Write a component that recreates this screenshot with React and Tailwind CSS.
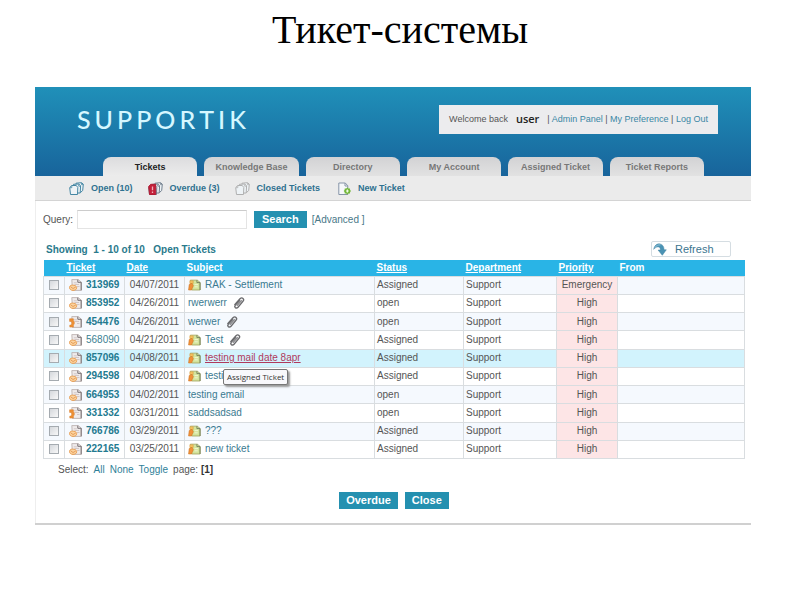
const TABS = ['Tickets', 'Knowledge Base', 'Directory', 'My Account', 'Assigned Ticket', 'Ticket Reports'];

const TICKETS = [
  { id: '313969', date: '04/07/2011', subject: 'RAK - Settlement', assigned: true, priority: 'Emergency' },
  { id: '853952', date: '04/26/2011', subject: 'rwerwerr', attachment: true },
  { id: '454476', date: '04/26/2011', subject: 'werwer', attachment: true, source: 'phone' },
  { id: '568090', date: '04/21/2011', subject: 'Test', assigned: true, attachment: true, read: true },
  { id: '857096', date: '04/08/2011', subject: 'testing mail date 8apr', assigned: true, active: true },
  { id: '294598', date: '04/08/2011', subject: 'testi', assigned: true, tooltip: 'Assigned Ticket' },
  { id: '664953', date: '04/02/2011', subject: 'testing email' },
  { id: '331332', date: '03/31/2011', subject: 'saddsadsad', source: 'phone' },
  { id: '766786', date: '03/29/2011', subject: '???', assigned: true },
  { id: '222165', date: '03/25/2011', subject: 'new ticket', assigned: true },
];

const COLUMNS = [
  { label: 'Ticket', sortable: true },
  { label: 'Date', sortable: true },
  { label: 'Subject' },
  { label: 'Status', sortable: true },
  { label: 'Department', sortable: true },
  { label: 'Priority', sortable: true },
  { label: 'From' },
];

function PagesIcon({ stroke, alert }) {
  return (
    <svg className="h-[14px] w-[15px] shrink-0" viewBox="0 0 15 14" fill="#eef3f6" stroke={stroke} aria-hidden="true">
      <path d="M7 1.2 12.600.7l1.700 1.500-.6 6.300-2.200 2H7z" />
      <path d="M4.500 2.300 9.700 2l1.900 1.700-.4 7.300H5z" />
      <path d="M.7 5.500 2.800 3.500h4.500l1.500 2-.3 7H1.500z" />
      <path d="M2.800 3.700v2H1M9.700 2.200v2h1.800M12.500 1v1.600h1.700" fill="none" strokeWidth=".8" />
      {alert && (
        <>
          <path d="M.7 4.500 2.700 2.300h5V12.500H1.500z" fill="#c3203a" stroke="#b01c35" />
          <path d="M4.500 4.500v3.700M4.500 9.600v1.300" stroke="#f0b0ba" strokeWidth="1.3" />
        </>
      )}
    </svg>
  );
}

function NewTicketIcon() {
  return (
    <svg className="h-[14px] w-[13px] shrink-0" viewBox="0 0 13 14" fill="none" aria-hidden="true">
      <path d="M.8 1h6.500l2.500 2.800V12.500H.8z" fill="#f6f8fa" stroke="#8795a8" />
      <path d="M7 1v3h2.800" stroke="#8795a8" />
      <path d="m9.300 5.200 1 1.400 1.700-.1.100 1.600 1 .9-1 .9-.1 1.600-1.700-.1-1 1.400-1-1.400-1.600.1-.1-1.600-.9-.9.9-.9.100-1.600 1.600.1z" fill="#73b73a" />
      <path d="M9.400 7.600v2.800M8 9h2.800" stroke="#f1fbe6" strokeWidth="1.200" />
    </svg>
  );
}

function TicketIcon({ source }) {
  return (
    <svg className="h-[12px] w-[13px] shrink-0" viewBox="0 0 13 12" fill="none" aria-hidden="true">
      <path d="M2.800.6h6.400L12.200 3v8.400H3.500z" fill="#efebeb" stroke="#b5a9a8" strokeWidth=".8" />
      <path d="M8.800.7v2.600h3.400v8" stroke="#777073" />
      <path d="M4.800 3.800h3M5.500 5.500h4.500M8 7.500h2.500" stroke="#c9bcbc" strokeWidth=".8" />
      {source === 'phone' ? (
        <path d="M.6 2.800h3.800v1.900c1.300 1.500 1.300 3 0 4.400v2H.8V9h1.500c.6-1.300.6-2.400 0-3.600H.6z" fill="#ee9136" stroke="#d97822" strokeWidth=".5" />
      ) : (
        <>
          <path d="M.5 8.500c0-1.500 1-2.400 3-2.400s4.200.7 4.200 2.600-1.700 2.700-3.700 2.700S.5 10.400.5 8.500z" fill="#fbd3a0" stroke="#e89b4c" strokeWidth=".9" />
          <path d="m1.500 7.700 2.500 1.800L6.800 8" stroke="#e08f45" strokeWidth=".8" />
        </>
      )}
    </svg>
  );
}

function AssignedIcon() {
  return (
    <svg className="h-[12px] w-[13px] shrink-0" viewBox="0 0 14 12" fill="none" aria-hidden="true">
      <path d="M2.500.8h7.500l3 2.400v8.200H4z" fill="#d3e49c" stroke="#a3a55f" strokeWidth=".9" />
      <path d="M9.600.8v2.600h3.400v8" stroke="#737f5d" />
      <path d="M2 1.500h3.600v2.800H2z" fill="#f6c765" stroke="#d99a3a" strokeWidth=".6" />
      <path d="M.6 11.400 1.300 5.500l3-1.300 1.500 2.500-2 4.700z" fill="#f0903a" stroke="#cf7622" strokeWidth=".6" />
      <path d="M7 5.600h3.800M7 8h3.500" stroke="#f3f9d9" />
    </svg>
  );
}

function ClipIcon() {
  return (
    <svg className="h-[12px] w-[12px] shrink-0" viewBox="0 0 12 12" fill="none" stroke="#6b6b6e" aria-hidden="true">
      <path d="M1.500 8 7 1.800c1-1 2.100-1.200 3-.4.9.9.8 2-.1 3L5 10.200c-.8.9-1.800 1-2.600.4-.8-.7-.7-1.700 0-2.500L7 3.200" strokeWidth="1.400" />
      <path d="m3.800 8.800 5-5.600" strokeWidth="1.500" stroke="#8b8b8e" />
    </svg>
  );
}

function RefreshIcon() {
  return (
    <svg className="h-[13px] w-[14px] shrink-0" viewBox="0 0 14 13" aria-hidden="true">
      <path d="M.7 6.300C1.500 2.400 4 .6 6.800.9c2.900.4 4.300 2.700 4.200 5.900h2.300l-4 5.500-4.200-5.200h2.300c.1-1.900-.5-3-1.900-3.200C3.800 3.700 2.300 4.500.7 6.300z" fill="#4a93b4" stroke="#3a7f9f" strokeWidth=".5" />
      <path d="M2 4.500C3.500 2.200 5.600 1.600 7.300 2" fill="none" stroke="#93c6dc" />
    </svg>
  );
}

function Header() {
  return (
    <header className="bg-linear-to-b from-[#2090b9] to-[#18649b]">
      <div className="flex h-[70px] items-start justify-between pt-[18px] pr-[33px] pl-[42px]">
        <h2 className="flex gap-[4px] font-['Lato'] text-[25px] leading-[28px] font-medium text-[#d5f7ff]" aria-label="SUPPORTIK">
          {[...'SUPPORTIK'].map((letter, i) => (
            <span key={i}>{letter}</span>
          ))}
        </h2>
        <div className="flex h-[29px] items-center bg-[#ececee] px-[10px] text-[9px] whitespace-nowrap text-[#555]">
          <span>Welcome back</span>
          <strong className="mx-2 font-['Open_Sans'] text-[11px] font-semibold text-[#222]">user</strong>
          <span>
            | <a href="#admin" className="text-[#3a87a5]">Admin Panel</a> |{' '}
            <a href="#preference" className="text-[#3a87a5]">My Preference</a> |{' '}
            <a href="#logout" className="text-[#3a87a5]">Log Out</a>
          </span>
        </div>
      </div>
      <nav className="flex gap-[7px] pr-[47px] pl-[68px]">
        {TABS.map((tab, i) => (
          <a
            key={tab}
            href="#tab"
            className={
              i === 0
                ? 'flex h-[19px] flex-1 items-center justify-center rounded-t-lg bg-linear-to-b from-[#dcdcde] to-[#ececec] pt-[3px] text-[9px] font-bold whitespace-nowrap text-[#222]'
                : 'flex h-[19px] flex-1 items-center justify-center rounded-t-lg bg-linear-to-b from-[#d2d2d4] to-[#e2e2e2] pt-[3px] text-[9px] font-bold whitespace-nowrap text-[#777]'
            }
          >
            {tab}
          </a>
        ))}
      </nav>
    </header>
  );
}

function SubNav() {
  return (
    <nav className="flex h-[25px] items-center gap-[15px] border-b border-[#d4d4d4] bg-[#ebebeb] pt-px pl-[34px] text-[9px] font-bold text-[#2f7190]">
      <a href="#open" className="flex items-center gap-[7px]">
        <PagesIcon stroke="#4486a3" />
        Open (10)
      </a>
      <a href="#overdue" className="flex items-center gap-[7px]">
        <PagesIcon stroke="#72808f" alert />
        Overdue (3)
      </a>
      <a href="#closed" className="flex items-center gap-[7px]">
        <PagesIcon stroke="#b0b0b0" />
        Closed Tickets
      </a>
      <a href="#new" className="flex items-center gap-[7px] pl-[3px]">
        <NewTicketIcon />
        New Ticket
      </a>
    </nav>
  );
}

function TicketRow({ ticket, striped }) {
  const cell = 'border border-[#d9dde0]';
  return (
    <tr className={ticket.active ? 'bg-[#d2f3fd]' : striped ? 'bg-[#f5f9fe]' : 'bg-white'}>
      <td className={cell}>
        <input
          type="checkbox"
          aria-label={`Select ticket ${ticket.id}`}
          className="mx-auto block size-[10px] appearance-none border border-[#a5abb0] bg-linear-to-br from-[#d5d8dc] to-[#f8f8f8]"
        />
      </td>
      <td className={`${cell} pl-[4px]`}>
        <a href="#ticket" className={ticket.read ? 'flex items-center gap-1 text-[#3b7f92]' : 'flex items-center gap-1 font-bold text-[#237a90]'}>
          <TicketIcon source={ticket.source} />
          {ticket.id}
        </a>
      </td>
      <td className={`${cell} text-center`}>{ticket.date}</td>
      <td className={`${cell} pl-[3px]`}>
        <div className="relative flex items-center gap-1">
          {ticket.assigned && <AssignedIcon />}
          <a href="#ticket" className={ticket.active ? 'text-[#b03a5c] underline' : 'text-[#3a7a90]'}>
            {ticket.subject}
          </a>
          {ticket.attachment && (
            <span className="pl-[2px]">
              <ClipIcon />
            </span>
          )}
          {ticket.tooltip && (
            <span
              role="tooltip"
              className="absolute top-0 left-[35px] z-10 rounded-xs border border-[#777] bg-[#f8f8fb] px-[3px] font-['Open_Sans'] text-[8px] leading-[14px] whitespace-nowrap text-[#333] shadow-[2px_2px_2px_#999]"
            >
              {ticket.tooltip}
            </span>
          )}
        </div>
      </td>
      <td className={`${cell} pl-[2px]`}>{ticket.assigned ? 'Assigned' : 'open'}</td>
      <td className={`${cell} pl-[2px]`}>Support</td>
      <td className={`${cell} bg-[#fde5e6] text-center`}>{ticket.priority || 'High'}</td>
      <td className={cell} />
    </tr>
  );
}

export default function App() {
  return (
    <main className="min-h-screen bg-white font-['Liberation_Sans',sans-serif] text-[10px] text-[#555]">
      <h1 className="pt-[6px] text-center font-['Liberation_Serif',serif] text-[40px] leading-[48px] text-black">
        Тикет-системы
      </h1>

      <div className="mt-[33px] mr-[49px] ml-[35px] border-b-2 border-[#d0d0d0]">
        <Header />
        <SubNav />

        <section className="border-l border-[#eee] pt-[9px] pr-[6px] pb-[14px] pl-[7px]">
          <form className="flex items-center" onSubmit={(e) => e.preventDefault()}>
            <label htmlFor="query">Query:</label>
            <input id="query" type="text" className="ml-1 h-[19px] w-[170px] border border-[#e4e4e4] border-t-[#ccc] px-1" />
            <button type="submit" className="ml-[7px] h-[17px] bg-[#2490b0] px-2 text-[11px] leading-[17px] font-bold text-white">
              Search
            </button>
            <a href="#advanced" className="ml-[5px] text-[#4a7888]">[Advanced ]</a>
          </form>

          <div className="mt-[12px] flex items-center justify-between pr-[14px] pl-[3px]">
            <p className="font-bold whitespace-pre text-[#2a7a8c]">{'Showing  1 - 10 of 10   Open Tickets'}</p>
            <button type="button" className="flex h-[16px] w-[80px] items-center gap-2 rounded-xs border border-[#d5dde2] bg-white pl-px text-[11px] text-[#3b7590]">
              <RefreshIcon />
              Refresh
            </button>
          </div>

          <table className="mt-[3px] h-[199px] w-full table-fixed border-collapse leading-[14px]">
            <colgroup>
              <col className="w-[21px]" />
              <col className="w-[60px]" />
              <col className="w-[60px]" />
              <col className="w-[190px]" />
              <col className="w-[89px]" />
              <col className="w-[93px]" />
              <col className="w-[61px]" />
              <col />
            </colgroup>
            <thead>
              <tr className="h-[16px] bg-[#29b4e6] text-left text-white">
                <td />
                {COLUMNS.map(({ label, sortable }) => (
                  <th key={label} scope="col" className="pl-[2px] font-bold">
                    {sortable ? <a href="#sort" className="underline">{label}</a> : label}
                  </th>
                ))}
              </tr>
            </thead>
            <tbody>
              {TICKETS.map((ticket, i) => (
                <TicketRow key={ticket.id} ticket={ticket} striped={i % 2 === 0} />
              ))}
            </tbody>
          </table>

          <div className="mt-[3px] flex gap-[5px] pl-[15px] leading-[16px]">
            <span>Select:</span>
            <a href="#all" className="text-[#2f7f99]">All</a>
            <a href="#none" className="text-[#2f7f99]">None</a>
            <a href="#toggle" className="text-[#2f7f99]">Toggle</a>
            <span>page: <b className="text-[#333]">[1]</b></span>
          </div>

          <div className="mt-[14px] flex justify-center gap-[7px]">
            <button type="button" className="h-[17px] bg-[#2490b0] px-[7px] text-[11px] leading-[17px] font-bold text-white">
              Overdue
            </button>
            <button type="button" className="h-[17px] bg-[#2490b0] px-[7px] text-[11px] leading-[17px] font-bold text-white">
              Close
            </button>
          </div>
        </section>
      </div>
    </main>
  );
}
